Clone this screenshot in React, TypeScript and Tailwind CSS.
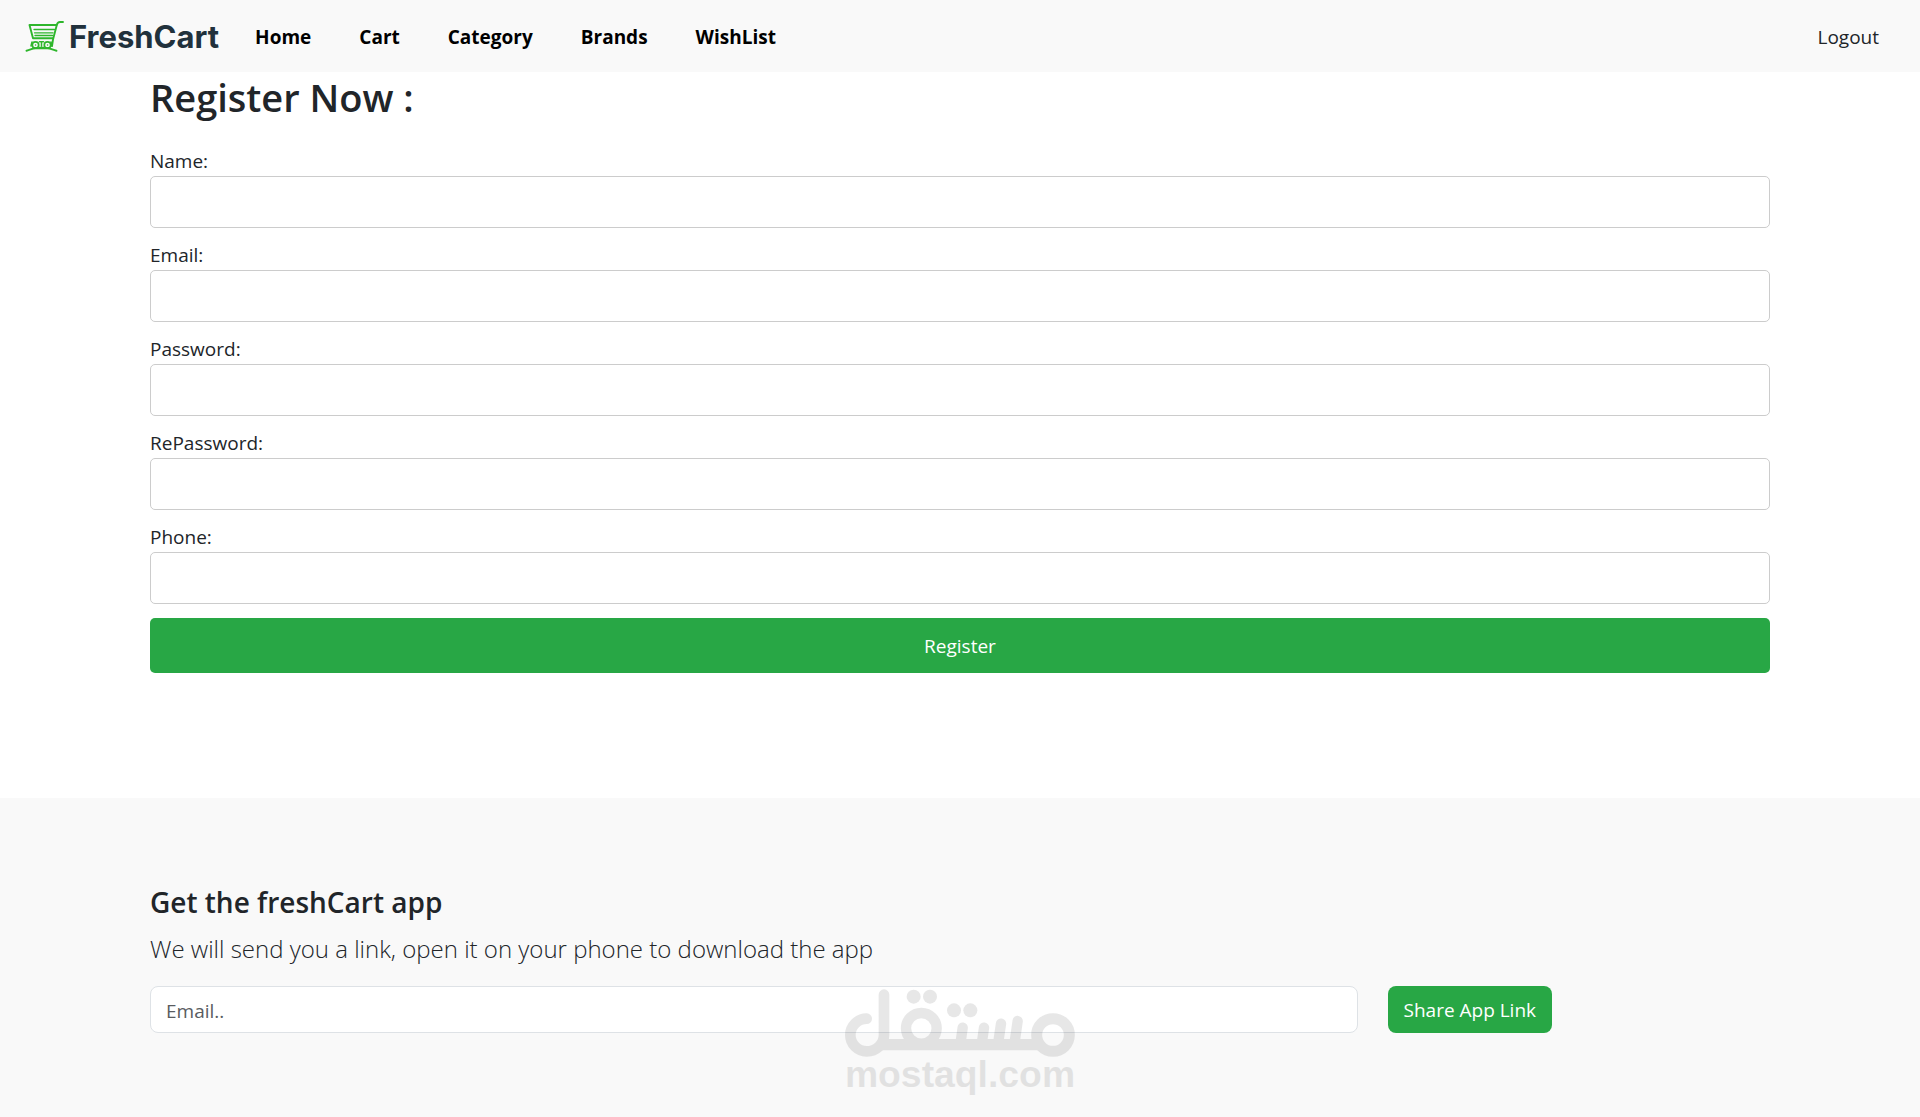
import React from "react";

const links = ["Home", "Cart", "Category", "Brands", "WishList"];

const fields = [
  { id: "name", label: "Name:", type: "text" },
  { id: "email", label: "Email:", type: "email" },
  { id: "password", label: "Password:", type: "password" },
  { id: "rePassword", label: "RePassword:", type: "password" },
  { id: "phone", label: "Phone:", type: "tel" },
];

function CartLogo() {
  return (
    <svg
      width="40"
      height="34"
      viewBox="0 0 40 34"
      fill="none"
      stroke="#2eb62c"
      strokeLinecap="round"
      strokeLinejoin="round"
      aria-hidden="true"
    >
      <path d="M38 2h-3c-2 0-2.700 1-3.200 3L28 19.500 27 26" strokeWidth="1.900" />
      <path d="M31.500 5H4.500l3.500 13.200h20" strokeWidth="1.900" />
      <path d="M9 9.500h20.500M9.500 12.800h18.500M10 15.500h17.500" strokeWidth="1.300" />
      <circle cx="10.500" cy="25" r="3.200" strokeWidth="1.700" />
      <circle cx="22.500" cy="25" r="3.200" strokeWidth="1.700" />
      <path d="M14.500 21.800h4M14.500 27.500h4M10.500 25h.1M22.500 25h.1M16.500 23v3M7 22l-1 4M26 22l1 4" strokeWidth="1.500" />
      <path d="M1.500 30.700c4-.8 5.500-2.500 9-2.500h12c3 0 5 1.600 9 2.500" strokeWidth="1.900" />
    </svg>
  );
}

function Navbar() {
  return (
    <nav className="flex h-[72px] items-center bg-[#f9f9f9] px-[25px] pt-0.5">
      <a href="#" className="flex items-center gap-1">
        <CartLogo />
        <span className="font-['Inter',sans-serif] text-[31px] leading-10 font-bold text-[#21313c]">FreshCart</span>
      </a>
      <ul className="ml-9 flex gap-12">
        {links.map((l) => (
          <li key={l}>
            <a href="#" className="text-[19px] font-bold text-black">
              {l}
            </a>
          </li>
        ))}
      </ul>
      <a href="#" className="mr-4 ml-auto text-[19px]">
        Logout
      </a>
    </nav>
  );
}

function RegisterForm() {
  return (
    <main className="px-[150px] pt-px pb-[125px]">
      <h1 className="text-[38px] leading-[48px] font-semibold">Register Now :</h1>
      <form className="mt-[25px]">
        <div className="flex flex-col gap-3">
          {fields.map((f) => (
            <div key={f.id} className="flex flex-col">
              <label htmlFor={f.id} className="text-[19px] leading-[30px]">
                {f.label}
              </label>
              <input id={f.id} type={f.type} className="h-[52px] w-full rounded-[5px] border border-[#ccc] bg-white px-4 text-[19px]" />
            </div>
          ))}
        </div>
        <button type="button" className="mt-[14px] h-[55px] w-full rounded-[5px] bg-[#28a745] pt-px text-[19px] text-white">
          Register
        </button>
      </form>
    </main>
  );
}

function Watermark() {
  return (
    <div className="pointer-events-none absolute inset-x-0 bottom-5 flex justify-center">
      <svg width="230" height="110" viewBox="75 50 690 330" className="opacity-[0.09]" fill="none" stroke="#000" strokeLinecap="round">
        <path d="M140 145A49 49 0 0 0 140 243A52 49 0 0 0 192 194V73" strokeWidth="32" />
        <path d="M180 223H660" strokeWidth="34" strokeLinecap="butt" />
        <circle cx="304" cy="174" r="46" strokeWidth="31" />
        <circle cx="699" cy="194" r="49" strokeWidth="33" />
        <path d="M428 172L422 215M492 172L486 215M543 160L535 215M593 152L584 215" strokeWidth="31" />
        <g fill="#000" stroke="none">
          <circle cx="281" cy="79" r="21" />
          <circle cx="330" cy="79" r="21" />
          <circle cx="402" cy="120" r="21" />
          <circle cx="451" cy="120" r="21" />
          <text x="420" y="351" textAnchor="middle" className="font-['Liberation_Sans',sans-serif] text-[112px] font-bold">
            mostaql.com
          </text>
        </g>
      </svg>
    </div>
  );
}

function AppLinkFooter() {
  return (
    <footer className="relative grow bg-[#f9f9f9] px-[150px] pt-[86px] pb-[84px]">
      <h2 className="text-[28px] leading-9 font-semibold">Get the freshCart app</h2>
      <p className="mt-2.5 text-[24px] leading-[38px] font-light">We will send you a link, open it on your phone to download the app</p>
      <form className="mt-[18px] grid grid-cols-4 gap-[30px]">
        <input
          type="email"
          aria-label="Email"
          placeholder="Email.."
          className="col-span-3 h-[47px] rounded-lg border border-[#dee2e6] bg-white px-[15px] pt-0.5 text-[19px] placeholder:text-[#595c5f]"
        />
        <button type="button" className="h-[47px] justify-self-start rounded-lg bg-[#28a745] px-4 pt-0.5 text-[19px] text-white">
          Share App Link
        </button>
      </form>
      <Watermark />
    </footer>
  );
}

export default function App() {
  return (
    <div className="flex min-h-screen flex-col bg-white font-['Open_Sans',sans-serif] text-[#212529]">
      <Navbar />
      <RegisterForm />
      <AppLinkFooter />
    </div>
  );
}
